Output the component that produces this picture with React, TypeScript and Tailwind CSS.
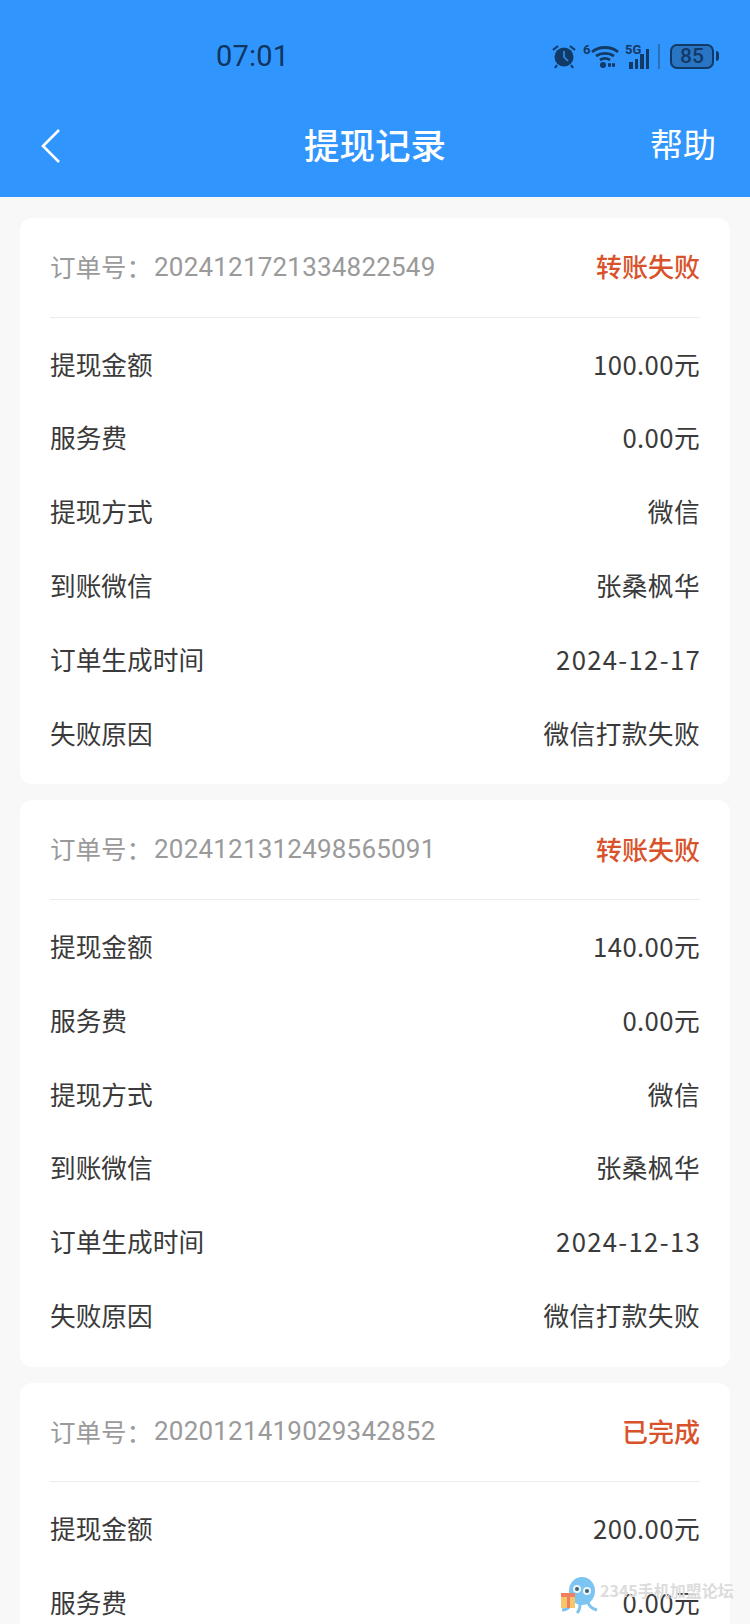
import React from "react";

const font = { fontFamily: '"Noto Sans CJK SC", "Noto Sans", sans-serif' };

type Order = { no: string; status: string; rows: [string, string][] };

const orders: Order[] = [
  {
    no: "2024121721334822549",
    status: "转账失败",
    rows: [
      ["提现金额", "100.00元"],
      ["服务费", "0.00元"],
      ["提现方式", "微信"],
      ["到账微信", "张桑枫华"],
      ["订单生成时间", "2024-12-17"],
      ["失败原因", "微信打款失败"],
    ],
  },
  {
    no: "2024121312498565091",
    status: "转账失败",
    rows: [
      ["提现金额", "140.00元"],
      ["服务费", "0.00元"],
      ["提现方式", "微信"],
      ["到账微信", "张桑枫华"],
      ["订单生成时间", "2024-12-13"],
      ["失败原因", "微信打款失败"],
    ],
  },
  {
    no: "2020121419029342852",
    status: "已完成",
    rows: [
      ["提现金额", "200.00元"],
      ["服务费", "0.00元"],
    ],
  },
];

function StatusIcons() {
  return (
    <div className="flex items-center text-[#123a66]">
      <svg width="26" height="26" viewBox="0 0 26 26" fill="none">
        <circle cx="13" cy="14" r="9.500" fill="#123a66" />
        <path d="M13 8v6l4 4" stroke="#2f8ff0" strokeWidth="1.600" fill="none" />
        <path d="M2 7l5-4M24 7l-5-4M6 22l-2 3M20 22l2 3" stroke="#123a66" strokeWidth="2.200" />
      </svg>
      <div className="flex items-start ml-[6px]">
        <span className="text-[13px] leading-[13px] font-bold font-['Roboto'] w-[8px]">6</span>
        <svg width="28" height="26" viewBox="0 0 28 26" fill="none" stroke="#123a66" strokeWidth="2.800">
          <path d="M1 9c7-6 19-6 26 0" />
          <path d="M5 13c5-3.500 13-3.500 18 0" />
          <path d="M9 17c3-2 7-2 10 0" />
          <circle cx="12" cy="22" r="3" fill="#123a66" stroke="none" />
          <path d="M17 22h7" strokeWidth="3.500" strokeDasharray="3 1" />
        </svg>
      </div>
      <div className="relative w-[30px] h-[26px] ml-[6px]">
        <span className="absolute left-0 top-0 text-[13px] leading-[13px] font-bold font-['Roboto']">5G</span>
        <div className="absolute left-[4px] bottom-0 flex items-end gap-[2px]">
          <div className="w-[3.500px] h-[7px] bg-[#123a66]" />
          <div className="w-[3.500px] h-[10px] bg-[#123a66]" />
          <div className="w-[3.500px] h-[15px] bg-[#123a66]" />
          <div className="w-[3.500px] h-[20px] bg-[#123a66]" />
        </div>
      </div>
      <div className="w-[2px] h-[25px] ml-[3px] bg-[#2a6fb8]" />
      <div className="flex items-center gap-[2px] ml-[10px]">
        <div className="w-[44px] h-[25px] rounded-[7px] border-2 border-[#123a66] bg-[#2a74c4] flex items-center justify-center text-[21px] font-medium font-['Roboto'] leading-none">
          85
        </div>
        <div className="w-[3px] h-[10px] rounded-r bg-[#123a66]" />
      </div>
    </div>
  );
}

function Card({ order }: { order: Order }) {
  return (
    <div className="bg-white rounded-[12px] px-[30px]">
      <div className="h-[99.500px] flex items-center justify-between border-b border-[#ececec]">
        <div className="text-[25.500px] text-[#9a9a9a] flex items-center">
          <span className="-mt-[2px]">订单号：</span>
          <span className="font-['Roboto'] ml-[2px] tracking-[0.2px] text-[26px]">{order.no}</span>
        </div>
        <div className="text-[26px] font-medium text-[#d8532c] -mt-[3px]">{order.status}</div>
      </div>
      <div className="pt-[9.500px] pb-[14.500px]">
        {order.rows.map(([k, v]) => (
          <div key={k} className="h-[73.800px] flex items-center justify-between text-[25.700px] text-[#3a3a3a]">
            <span>{k}</span>
            {v.includes("-") ? (
              <span className="tracking-[1.300px] -mr-[1px]">{v}</span>
            ) : (
              <span className="tracking-[0.400px]">{v}</span>
            )}
          </div>
        ))}
      </div>
    </div>
  );
}

export default function App() {
  return (
    <div className="relative w-[750px] h-[1624px] overflow-hidden bg-[#f8f8f8]" style={font}>
      <header className="h-[197px] bg-[#3195fe] flex flex-col">
        <div className="h-[112px] pt-[36px] pl-[216px] pr-[31px] flex items-start justify-between">
          <span className="text-[29px] leading-[40px] text-[#0f3560] font-['Roboto'] tracking-[0.2px]">07:01</span>
          <div className="pt-[7px]">
            <StatusIcons />
          </div>
        </div>
        <div className="flex-1 relative flex items-center justify-between pl-[40px] pr-[34px] pb-[17px]">
          <svg width="22" height="36" viewBox="0 0 22 36" fill="none" stroke="white" strokeWidth="2.600">
            <path d="M19 2 3 18l16 16" />
          </svg>
          <span className="absolute left-0 right-0 text-center text-[35.500px] font-medium text-white pb-[4px]">提现记录</span>
          <span className="text-[33px] text-white -mt-[4px]">帮助</span>
        </div>
      </header>
      <main className="px-[20px] pt-[21px] flex flex-col gap-[16px]">
        {orders.map((o) => (
          <Card key={o.no} order={o} />
        ))}
      </main>
      <div className="absolute left-[558px] top-[1574px] flex items-start pointer-events-none">
        <svg width="42" height="42" viewBox="0 0 42 42">
          <ellipse cx="24" cy="17" rx="13" ry="14" fill="#7cc4f2" />
          <path d="M14 28c-2 6-6 8-10 8M30 28c1 5 5 7 9 8M22 30c0 4-1 7-3 9" stroke="#7cc4f2" strokeWidth="3" fill="none" />
          <circle cx="19" cy="15" r="4" fill="#e9f5fd" />
          <circle cx="29" cy="17" r="4" fill="#e9f5fd" />
          <circle cx="19" cy="15" r="2" fill="#47606f" />
          <circle cx="29" cy="17" r="2" fill="#47606f" />
          <rect x="3" y="21" width="14" height="13" fill="#f6c66a" />
          <rect x="3" y="19" width="14" height="4" fill="#ef7f5f" />
          <rect x="9" y="19" width="3" height="15" fill="#ef7f5f" />
        </svg>
        <span className="text-[16px] leading-[18px] font-bold text-[#dcdcdc] mt-[7px] whitespace-nowrap">2345手机加盟论坛</span>
      </div>
    </div>
  );
}
